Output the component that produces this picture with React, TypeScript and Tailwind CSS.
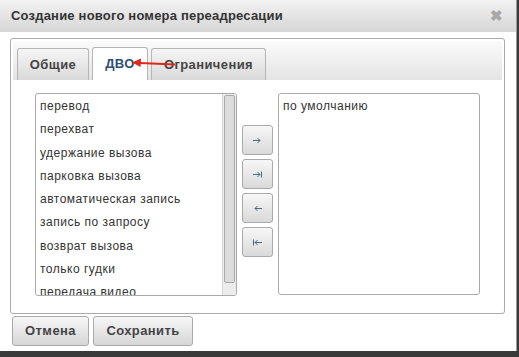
import React from "react";

const items = [
  "перевод",
  "перехват",
  "удержание вызова",
  "парковка вызова",
  "автоматическая запись",
  "запись по запросу",
  "возврат вызова",
  "только гудки",
  "передача видео",
];

const moveButtons = ["→", "→|", "←", "|←"];

const ArrowGlyph = ({ kind }: { kind: string }) => {
  const bar = kind.includes("|");
  const right = kind.startsWith("→");
  return (
    <svg width="11" height="9" viewBox="0 0 11 9" className="text-[#4a6a80]">
      {right ? (
        <path d="M1 4.5h7M5.5 2l2.5 2.5-2.5 2.5" stroke="currentColor" fill="none" strokeWidth="1" />
      ) : (
        <path d="M10 4.5H3M5.5 2L3 4.5l2.5 2.5" stroke="currentColor" fill="none" strokeWidth="1" />
      )}
      {bar && right && <path d="M9.5 1.5v6" stroke="currentColor" strokeWidth="1" />}
      {bar && !right && <path d="M1.5 1.5v6" stroke="currentColor" strokeWidth="1" />}
    </svg>
  );
};

export default function App() {
  return (
    <div className="h-[357px] w-[519px] bg-[#3a3a3a] font-['Liberation_Sans',Arial,sans-serif]">
      <div className="flex h-[351px] w-[517px] flex-col border-r border-[#9a9a9a] bg-white">
        <div className="flex h-[32px] items-center justify-between bg-gradient-to-b from-[#f2f2f2] to-[#d6d6d6] pl-[11px] pr-[13px]">
          <span className="text-[13px] font-bold tracking-[0.2px] text-[#333]">
            Создание нового номера переадресации
          </span>
          <span className="text-[15px] font-bold text-[#a8a8a8]">✖</span>
        </div>

        <div className="mx-[10px] mt-[6px] h-[276px] w-[495px] rounded-[3px] border border-[#aaa] p-[2px]">
          <div className="relative flex h-[39px] items-end gap-[3px] bg-gradient-to-b from-[#fbfbfb] to-[#e4e4e4] pl-[4px]">
            <div className="flex h-[32px] w-[72px] items-center justify-center rounded-t-[3px] border border-b-0 border-[#b5b5b5] bg-gradient-to-b from-[#f6f6f6] to-[#d9d9d9] text-[13px] font-bold tracking-[0.4px] text-[#444]">
              Общие
            </div>
            <div className="flex h-[33px] w-[56px] items-center justify-center rounded-t-[3px] border border-b-0 border-[#b5b5b5] bg-white text-[13px] font-bold tracking-[0.4px] text-[#2c5170]">
              ДВО
            </div>
            <div className="flex h-[32px] w-[115px] items-center justify-center rounded-t-[3px] border border-b-0 border-[#b5b5b5] bg-gradient-to-b from-[#f6f6f6] to-[#d9d9d9] text-[13px] font-bold tracking-[0.4px] text-[#444]">
              Ограничения
            </div>
            <svg
              className="absolute left-[118px] top-[16px]"
              width="46"
              height="12"
              viewBox="0 0 46 12"
            >
              <path d="M44 7.5L9 6" stroke="#e2261c" strokeWidth="2" />
              <path d="M1 5.5L10 1.5L9.5 10Z" fill="#e2261c" />
            </svg>
          </div>

          <div className="flex gap-[5px] pl-[22px] pt-[13px]">
            <div className="flex h-[203px] w-[202px] overflow-hidden rounded-[3px] border border-[#aaa]">
              <div className="flex-1 overflow-hidden pl-[4px] pt-[1px]">
                {items.map((t) => (
                  <div
                    key={t}
                    className="h-[23.3px] text-[12px] leading-[23px] tracking-[0.5px] text-[#333]"
                  >
                    {t}
                  </div>
                ))}
              </div>
              <div className="w-[14px] border-l border-[#d6d6d6] bg-[#ececec] p-[1px]">
                <div className="h-[188px] rounded-[2px] border border-[#aaa] bg-[#dcdcdc]" />
              </div>
            </div>

            <div className="flex flex-col gap-[4px] pt-[32px]">
              {moveButtons.map((b) => (
                <div
                  key={b}
                  className="flex h-[30px] w-[31px] items-center justify-center rounded-[3px] border border-[#aaa] bg-gradient-to-b from-[#f7f7f7] to-[#d9d9d9]"
                >
                  <ArrowGlyph kind={b} />
                </div>
              ))}
            </div>

            <div className="h-[202px] w-[202px] rounded-[3px] border border-[#aaa] pl-[4px] pt-[1px]">
              <div className="h-[23px] text-[12px] leading-[23px] tracking-[0.5px] text-[#333]">
                по умолчанию
              </div>
            </div>
          </div>
        </div>

        <div className="mt-[2px] flex gap-[4px] pl-[12px]">
          <div className="flex h-[30px] w-[77px] items-center justify-center rounded-[3px] border border-[#aaa] bg-gradient-to-b from-[#f7f7f7] to-[#d6d6d6] text-[13px] font-bold tracking-[0.4px] text-[#444]">
            Отмена
          </div>
          <div className="flex h-[30px] w-[100px] items-center justify-center rounded-[3px] border border-[#aaa] bg-gradient-to-b from-[#f7f7f7] to-[#d6d6d6] text-[13px] font-bold tracking-[0.4px] text-[#444]">
            Сохранить
          </div>
        </div>
      </div>
    </div>
  );
}
